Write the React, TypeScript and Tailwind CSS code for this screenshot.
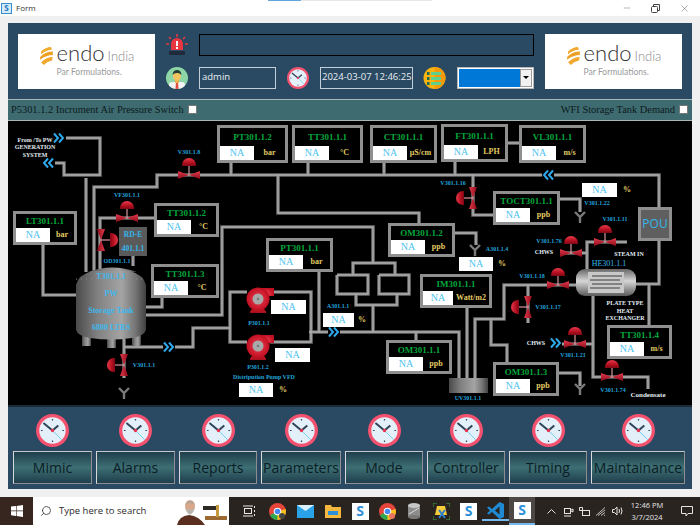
import { Minus, Search, X } from "lucide-react";

const serif = "font-['Liberation_Serif',serif]";

type Box = { t: string; x: number; y: number; w: number; h: number; u: string; nw?: number };

const boxes: Box[] = [
  { t: "LT301.1.1", x: 13, y: 211, w: 64, h: 34, u: "bar" },
  { t: "TT301.1.2", x: 154, y: 203, w: 65, h: 34, u: "°C" },
  { t: "TT301.1.3", x: 151, y: 264, w: 68, h: 34, u: "°C" },
  { t: "PT301.1.2", x: 217, y: 125, w: 71, h: 38, u: "bar" },
  { t: "TT301.1.1", x: 292, y: 125, w: 71, h: 38, u: "°C" },
  { t: "CT301.1.1", x: 370, y: 125, w: 67, h: 38, u: "µS/cm" },
  { t: "FT301.1.1", x: 441, y: 124, w: 67, h: 38, u: "LPH" },
  { t: "VL301.1.1", x: 519, y: 125, w: 67, h: 38, u: "m/s" },
  { t: "OM301.1.2", x: 388, y: 223, w: 67, h: 34, u: "ppb" },
  { t: "PT301.1.1", x: 266, y: 238, w: 67, h: 34, u: "bar" },
  { t: "OM301.1.1", x: 386, y: 340, w: 66, h: 34, u: "ppb" },
  { t: "IM301.1.1", x: 420, y: 274, w: 72, h: 34, u: "Watt/m2", nw: 30 },
  { t: "TOCT301.1.1", x: 493, y: 191, w: 67, h: 34, u: "ppb" },
  { t: "TT301.1.4", x: 607, y: 325, w: 65, h: 34, u: "m/s" },
  { t: "OM301.1.3", x: 493, y: 362, w: 66, h: 34, u: "ppb" },
];

const values = [
  { x: 271, y: 300, w: 35 },
  { x: 275, y: 348, w: 35 },
  { x: 239, y: 383, w: 34, u: "%", ux: 283 },
  { x: 323, y: 313, w: 31, u: "%", ux: 362 },
  { x: 459, y: 257, w: 34, u: "%", ux: 502 },
  { x: 582, y: 183, w: 35, u: "%", ux: 627 },
];

const labels = [
  { t: "V301.1.8", x: 189, y: 152 },
  { t: "VF301.1.1", x: 127, y: 195 },
  { t: "OD301.1.1", x: 117, y: 261 },
  { t: "V301.1.1", x: 144, y: 365 },
  { t: "P301.1.1", x: 259, y: 323 },
  { t: "P301.1.2", x: 258, y: 367 },
  { t: "Distripution Pump VFD", x: 264, y: 377 },
  { t: "A301.1.1", x: 338, y: 306 },
  { t: "V301.1.16", x: 453, y: 183 },
  { t: "V301.1.22", x: 597, y: 203 },
  { t: "V301.1.11", x: 615, y: 219 },
  { t: "V301.1.76", x: 549, y: 241 },
  { t: "A301.1.4", x: 497, y: 249 },
  { t: "V301.1.18", x: 532, y: 276 },
  { t: "V301.1.17", x: 548, y: 307 },
  { t: "V301.1.21", x: 573, y: 355 },
  { t: "V301.1.74", x: 613, y: 390 },
  { t: "UV301.1.1", x: 468, y: 398 },
];

const whiteLabels = [
  { t: "From /To PW", x: 35, y: 140 },
  { t: "GENERATION", x: 35, y: 147 },
  { t: "SYSTEM", x: 35, y: 155 },
  { t: "CHWS", x: 544, y: 252 },
  { t: "STEAM IN", x: 629, y: 254 },
  { t: "PLATE TYPE", x: 625, y: 303 },
  { t: "HEAT", x: 625, y: 311 },
  { t: "EXCHANGER", x: 625, y: 318 },
  { t: "CHWS", x: 536, y: 343 },
];

const tankText = [
  { t: "T301.1.1", y: 277 },
  { t: "PW", y: 294 },
  { t: "Storage Tank", y: 311 },
  { t: "6800 LTRS", y: 328 },
];

const pipes = [
  "66,138 100,138 100,175 64,175 64,163 55,163",
  "86,178 86,272",
  "94,272 94,187 157,187 157,175 659,175 659,207",
  "231,163 231,175",
  "308,163 308,175",
  "384,163 384,175",
  "455,162 455,175",
  "508,143 519,143",
  "278,175 278,213 419,213 419,223",
  "146,315 222,315 222,227 373,227 373,263",
  "353,275 353,263 395,263 395,275",
  "356,294 356,305 397,305 397,294",
  "337,275 368,275 368,294 337,294 337,275",
  "379,275 409,275 409,294 379,294 379,275",
  "373,305 373,332",
  "124,339 124,378",
  "124,347 193,347 193,328 230,328",
  "247,292 230,292 230,342 247,342",
  "270,292 311,292 311,342 270,342",
  "309,332 459,332 459,378",
  "416,332 416,340",
  "319,272 319,332",
  "467,308 467,378",
  "475,378 475,319 504,319 504,285 576,285",
  "528,285 528,323",
  "491,319 491,345 507,345 507,362",
  "559,373 580,373 580,386",
  "636,284 659,284 659,241",
  "649,284 649,325",
  "593,296 593,377 648,377 648,389",
  "556,344 593,344",
  "587,269 587,242 627,242",
  "560,253 587,253",
  "473,175 473,215 493,215",
  "560,199 580,199 580,212",
  "455,233 476,233 476,245",
  "154,218 100,218 100,272",
  "133,256 133,266",
  "43,245 43,295 76,295",
  "146,307 162,307 162,297",
];

const valves = [
  { x: 189, y: 175, r: 0 },
  { x: 127, y: 218, r: 0 },
  { x: 101, y: 240, r: 90 },
  { x: 124, y: 365, r: -90 },
  { x: 473, y: 198, r: -90 },
  { x: 605, y: 242, r: 0 },
  { x: 571, y: 253, r: 0 },
  { x: 558, y: 285, r: 0 },
  { x: 528, y: 307, r: -90 },
  { x: 575, y: 344, r: 0 },
  { x: 612, y: 377, r: 0 },
];

const chevrons = [
  { x: 59, y: 138, d: 1 },
  { x: 48, y: 163, d: -1 },
  { x: 169, y: 347, d: 1 },
  { x: 334, y: 332, d: 1 },
  { x: 548, y: 175, d: -1 },
  { x: 556, y: 343, d: 1 },
];

const drains = [
  { x: 124, y: 392 },
  { x: 475, y: 249 },
  { x: 580, y: 216 },
  { x: 580, y: 388 },
];

const menu = [
  { t: "Mimic", w: "w-[79px]" },
  { t: "Alarms", w: "w-[79px]" },
  { t: "Reports", w: "w-[78px]" },
  { t: "Parameters", w: "w-[80px]" },
  { t: "Mode", w: "w-[78px]" },
  { t: "Controller", w: "w-[78px]" },
  { t: "Timing", w: "w-[78px]" },
  { t: "Maintainance", w: "w-[94px]" },
];

const Clock = ({ size }: { size: number }) => (
  <svg width={size} height={size} viewBox="0 0 40 40" className="shrink-0">
    <circle cx="20" cy="20" r="20" fill="#f4516f" />
    <circle cx="20" cy="20" r="16" fill="#e3eff9" />
    <path d="M20 6v2M20 32v2M6 20h2M32 20h2" stroke="#33475b" strokeWidth="1.5" />
    <path d="M20 20 L9 11" stroke="#2f4358" strokeWidth="2.4" />
    <path d="M20 20 L27 14" stroke="#2f4358" strokeWidth="2.4" />
    <path d="M20 20 L31 31" stroke="#6fd0f2" strokeWidth="1.2" />
    <circle cx="20" cy="20" r="2" fill="#e8334f" />
  </svg>
);

const Logo = () => (
  <div className="flex h-[55px] w-[137px] shrink-0 items-center justify-center gap-[3px] bg-white pb-[2px]">
    <svg width="15" height="20" viewBox="0 0 16 22" className="mb-[8px]">
      <path d="M2 6 Q7 1 13 1 L14 4 Q8 4 2 9Z" fill="#f0a92e" />
      <path d="M1 12 Q7 6 15 6 L15 10 Q8 10 1 15Z" fill="#eda024" />
      <path d="M2 18 Q8 12 15 12 L14 16 Q9 17 5 21Z" fill="#f0a92e" />
    </svg>
    <div className="flex flex-col">
      <div className="flex items-baseline gap-[3px] font-['Lato',sans-serif] font-light leading-[19px]">
        <span className="text-[22px] text-[#333]">endo</span>
        <span className="text-[13px] text-[#8b8b8b]">India</span>
      </div>
      <span className="font-['Lato',sans-serif] text-[8.5px] leading-[12px] text-[#9a9a9a]">Par Formulations.</span>
    </div>
  </div>
);

const Alarm = () => (
  <svg width="22" height="23" viewBox="0 0 22 23" className="shrink-0">
    <path d="M5 17 V11 a6 6 0 0 1 12 0 V17Z" fill="#e8363f" />
    <rect x="10" y="8" width="2" height="5" fill="#fff" />
    <rect x="10" y="14" width="2" height="2" fill="#fff" />
    <rect x="3" y="18" width="16" height="4" rx="1" fill="#1f2a3a" />
    <path d="M11 1v3M3 4l2 2M19 4l-2 2M0 11h3M19 11h3" stroke="#e8363f" strokeWidth="1.6" />
  </svg>
);

const Avatar = () => (
  <svg width="22" height="22" viewBox="0 0 22 22" className="shrink-0">
    <circle cx="11" cy="11" r="11" fill="#8ed6a6" />
    <clipPath id="av">
      <circle cx="11" cy="11" r="11" />
    </clipPath>
    <g clipPath="url(#av)">
      <rect x="3" y="15" width="16" height="8" rx="3" fill="#f4f4f4" />
      <path d="M10 16h2l.6 6h-3.2Z" fill="#e0513f" />
      <rect x="9" y="12" width="4" height="4" fill="#eeb04c" />
      <ellipse cx="11" cy="9" rx="4" ry="4.5" fill="#f7c35f" />
      <path d="M6.5 8 Q7 3 11 3 Q15 3 15.5 8 Q13 5.5 11 6 Q8 6 6.5 8Z" fill="#25403a" />
    </g>
  </svg>
);

const MenuBadge = () => (
  <svg width="23" height="22" viewBox="0 0 23 22" className="shrink-0">
    <circle cx="11.5" cy="11" r="11" fill="#f9b30f" />
    <path d="M11.5 0a11 11 0 0 1 0 22Z" fill="#f39a0b" />
    <g fill="#5fd08c">
      <rect x="8" y="5" width="10" height="3" />
      <rect x="8" y="10" width="10" height="3" />
      <rect x="8" y="15" width="10" height="3" />
    </g>
    <g fill="#1d6b55">
      <rect x="4" y="5" width="2.5" height="3" />
      <rect x="4" y="10" width="2.5" height="3" />
      <rect x="4" y="15" width="2.5" height="3" />
    </g>
  </svg>
);

const Valve = ({ x, y, r }: { x: number; y: number; r: number }) => (
  <g transform={`translate(${x} ${y}) rotate(${r})`}>
    <path d="M-7 -10 a7 7 0 0 1 14 0 v1 h-14Z" fill="url(#dome)" />
    <rect x="-0.6" y="-9" width="1.2" height="9" fill="#d8959b" />
    <path d="M-11 -4 L0 0 L-11 4Z" fill="url(#bow)" />
    <path d="M11 -4 L0 0 L11 4Z" fill="url(#bow)" />
  </g>
);

const Chevron = ({ x, y, d }: { x: number; y: number; d: number }) => (
  <g transform={`translate(${x} ${y}) scale(${d} 1)`} fill="none" stroke="#2fa9ec" strokeWidth="2">
    <rect x="-6" y="-5" width="12" height="10" fill="#000" stroke="none" />
    <path d="M-5 -4.5 L-1 0 L-5 4.5" />
    <path d="M0 -4.5 L4 0 L0 4.5" />
  </g>
);

const Pump = ({ y }: { y: number }) => (
  <g transform={`translate(258 ${y})`}>
    <path d="M-8 14h16v-2h-16Z" fill="#a8101f" />
    <path d="M-5 8 L-8 13h16 L5 8Z" fill="#b5121f" />
    <path d="M0 -11 H16 V-3 H10 V0 H0Z" fill="url(#pump)" />
    <circle r="11.5" fill="url(#pump)" />
    <circle r="5.5" fill="#a9a9a9" />
    <circle r="1.2" fill="#777" />
  </g>
);

const Diagram = () => (
  <svg viewBox="8 121 684 284" className="absolute inset-0 h-full w-full">
    <defs>
      <linearGradient id="dome" x1="0" y1="0" x2="0" y2="1">
        <stop offset="0" stopColor="#e73a4a" />
        <stop offset="0.6" stopColor="#b30f20" />
        <stop offset="1" stopColor="#7e0714" />
      </linearGradient>
      <linearGradient id="bow" x1="0" y1="0" x2="0" y2="1">
        <stop offset="0" stopColor="#e43a4c" />
        <stop offset="1" stopColor="#8d0b1a" />
      </linearGradient>
      <radialGradient id="pump">
        <stop offset="0" stopColor="#f04052" />
        <stop offset="1" stopColor="#c10f22" />
      </radialGradient>
      <linearGradient id="steel" x1="0" y1="0" x2="1" y2="0">
        <stop offset="0" stopColor="#4a4a4a" />
        <stop offset="0.3" stopColor="#808080" />
        <stop offset="0.65" stopColor="#a4a4a4" />
        <stop offset="0.85" stopColor="#747474" />
        <stop offset="1" stopColor="#404040" />
      </linearGradient>
      <linearGradient id="shell" x1="0" y1="0" x2="0" y2="1">
        <stop offset="0" stopColor="#666" />
        <stop offset="0.45" stopColor="#d6d6d6" />
        <stop offset="1" stopColor="#5a5a5a" />
      </linearGradient>
    </defs>
    <g fill="none" strokeLinejoin="miter">
      {pipes.map((p) => (
        <polyline key={p} points={p} stroke="#6e6e6e" strokeWidth="3.6" />
      ))}
      {pipes.map((p) => (
        <polyline key={p} points={p} stroke="#b0b0b0" strokeWidth="1.4" />
      ))}
    </g>

    <g fill="url(#steel)">
      <rect x="82" y="333" width="9" height="13" />
      <rect x="107" y="335" width="9" height="13" />
      <rect x="132" y="333" width="9" height="13" />
      <path d="M88 272 Q112 263 137 272Z" />
      <path d="M76 285 Q78 275 92 271 H130 Q144 275 146 285 V330 Q144 336 132 338 Q111 341 90 338 Q78 336 76 330Z" />
    </g>
    <path d="M76 279 H146" stroke="#8b8b8b" strokeDasharray="1 4" />

    <rect x="449" y="378" width="39" height="15" fill="url(#steel)" />

    <rect x="576" y="269" width="60" height="27" rx="9" fill="url(#shell)" />
    <rect x="588" y="272" width="36" height="21" fill="#c8c8c8" />
    <path d="M592 276 H622 M590 280 H620 M592 284 H622 M590 288 H620" stroke="#3d3d3d" strokeWidth="1.2" />

    {valves.map((v) => (
      <Valve key={`${v.x}-${v.y}`} {...v} />
    ))}
    <Pump y={299} />
    <Pump y={346} />
    {chevrons.map((c) => (
      <Chevron key={`${c.x}-${c.y}`} {...c} />
    ))}
    {drains.map((d) => (
      <path
        key={`${d.x}-${d.y}`}
        d={`M${d.x - 5} ${d.y - 4} L${d.x} ${d.y + 1} L${d.x + 5} ${d.y - 4} M${d.x} ${d.y + 1} V${d.y + 7}`}
        stroke="#7a7a7a"
        strokeWidth="2.4"
        fill="none"
      />
    ))}
  </svg>
);

const NaBox = ({ w }: { w: number }) => (
  <div
    className={`flex h-[14px] shrink-0 items-center justify-center bg-white ${serif} text-[10px] leading-none text-[#4dc3f0]`}
    style={{ width: w }}
  >
    NA
  </div>
);

const Instrument = ({ t, x, y, w, h, u, nw = 34 }: Box) => (
  <div
    className="absolute flex flex-col border-[3px] border-[#8f8f8f] bg-black"
    style={{ left: x - 8, top: y - 121, width: w, height: h }}
  >
    <div className={`flex flex-1 items-center justify-center ${serif} text-[9px] font-bold leading-none text-[#00a83c]`}>{t}</div>
    <div className="flex items-center">
      <NaBox w={nw} />
      <span className={`flex-1 whitespace-nowrap text-center ${serif} text-[8px] font-bold leading-none text-[#e2cb63]`}>{u}</span>
    </div>
  </div>
);

const Mimic = () => (
  <div className="relative h-[284px] overflow-hidden bg-black">
    <Diagram />
    {tankText.map((l) => (
      <span
        key={l.t}
        className={`absolute left-[103px] -translate-x-1/2 -translate-y-1/2 whitespace-nowrap ${serif} text-[8px] font-bold text-[#3db8ee]`}
        style={{ top: l.y - 121 }}
      >
        {l.t}
      </span>
    ))}
    {boxes.map((b) => (
      <Instrument key={b.t} {...b} />
    ))}
    {values.map((v) => (
      <div key={v.x}>
        <div className="absolute" style={{ left: v.x - 8, top: v.y - 121 }}>
          <NaBox w={v.w} />
        </div>
        {v.u && (
          <span
            className={`absolute -translate-x-1/2 ${serif} text-[8px] font-bold leading-[14px] text-[#e2cb63]`}
            style={{ left: v.ux! - 8, top: v.y - 121 }}
          >
            {v.u}
          </span>
        )}
      </div>
    ))}
    {labels.map((l) => (
      <span
        key={l.t}
        className={`absolute -translate-x-1/2 -translate-y-1/2 whitespace-nowrap ${serif} text-[6px] font-bold text-[#21a4dc]`}
        style={{ left: l.x - 8, top: l.y - 121 }}
      >
        {l.t}
      </span>
    ))}
    {whiteLabels.map((l) => (
      <span
        key={`${l.t}-${l.y}`}
        className={`absolute -translate-x-1/2 -translate-y-1/2 whitespace-nowrap ${serif} text-[6px] font-bold text-[#e3eef5]`}
        style={{ left: l.x - 8, top: l.y - 121 }}
      >
        {l.t}
      </span>
    ))}
    <span className={`absolute left-[640px] top-[274px] -translate-x-1/2 -translate-y-1/2 whitespace-nowrap ${serif} text-[7px] font-bold text-[#e3eef5]`}>
      Condensate
    </span>
    <span className={`absolute left-[601px] top-[143px] -translate-x-1/2 -translate-y-1/2 whitespace-nowrap ${serif} text-[8px] text-[#35b6ec]`}>
      HE301.1.1
    </span>
    <div className={`absolute left-[111px] top-[106px] flex h-[29px] w-[28px] flex-col items-center justify-between bg-[#5a5a5a] py-[2px] ${serif} text-[7.5px] font-bold text-[#35b6ec]`}>
      <span>RD-E</span>
      <span>401.1.1</span>
    </div>
    <div className="absolute left-[630px] top-[86px] flex h-[34px] w-[34px] items-center justify-center border-[3px] border-[#8f8f8f] bg-[#5f5f5f] font-['Open_Sans',sans-serif] text-[12px] text-[#35b6ec]">
      POU
    </div>
  </div>
);

const Header = () => (
  <div className="flex h-[76px] items-center gap-[11px] bg-[#2a4a63] pl-[10px] pr-[10px]">
    <Logo />
    <div className="flex w-[368px] flex-col gap-[11px]">
      <div className="flex h-[22px] items-center gap-[11px]">
        <Alarm />
        <div className="h-[22px] flex-1 border border-black" />
      </div>
      <div className="flex h-[22px] items-center font-['Open_Sans',sans-serif] text-[9.5px] text-[#e8eef2]">
        <Avatar />
        <div className="ml-[11px] flex h-[22px] w-[77px] items-center border border-[#c4ced6] px-[2px]">admin</div>
        <div className="ml-[11px]">
          <Clock size={22} />
        </div>
        <div className="ml-[11px] flex h-[22px] w-[93px] items-center whitespace-nowrap border border-[#c4ced6] pl-[1px]">
          2024-03-07 12:46:25
        </div>
        <div className="ml-[10px]">
          <MenuBadge />
        </div>
        <div className="ml-[11px] flex h-[22px] w-[77px] items-center border border-[#b8b8b8] bg-white p-[1px]">
          <div className="h-full flex-1 bg-[#0078d7]" />
          <div className="flex h-full w-[12px] items-center justify-center border border-[#9a9a9a] bg-[#f2f2f2]">
            <div className="h-0 w-0 border-x-[3px] border-t-[3px] border-x-transparent border-t-black" />
          </div>
        </div>
      </div>
    </div>
    <Logo />
  </div>
);

const Strip = () => (
  <div className={`flex h-[22px] items-center justify-between border-y border-[#a9b5b7] bg-[#3e6b70] pl-[3px] pr-[4px] ${serif} text-[10.4px] text-[#0d1a1c]`}>
    <div className="flex items-center gap-[4px]">
      <span>P5301.1.2 Incrument Air Pressure Switch</span>
      <div className="h-[9px] w-[9px] rounded-[1px] border border-[#777] bg-white" />
    </div>
    <div className="flex items-center gap-[4px]">
      <span>WFI Storage Tank Demand</span>
      <div className="h-[9px] w-[9px] rounded-[1px] border border-[#777] bg-white" />
    </div>
  </div>
);

const Footer = () => (
  <div className="flex h-[84px] gap-[4px] border-t-2 border-[#1d2a33] bg-[#2a4a63] pl-[5px] pt-[7px]">
    {menu.map((m) => (
      <div key={m.t} className={`flex ${m.w} flex-col items-center gap-[4px]`}>
        <Clock size={33} />
        <div className="flex h-[33px] w-full items-center justify-center border border-[#8f8f8f] border-l-[#d8d8d8] border-t-[#c8c8c8] bg-gradient-to-b from-[#1f3f4d] via-[#3e6f74] to-[#1f3f4d] font-['Open_Sans',sans-serif] text-[14px] text-[#0b1d24]">
          {m.t}
        </div>
      </div>
    ))}
  </div>
);

const TbS = () => (
  <div className="flex h-[17px] w-[17px] items-center justify-center bg-white font-['Open_Sans',sans-serif] text-[14px] font-bold leading-none text-[#2d8fd8]">S</div>
);

const Chrome = ({ dot }: { dot: string }) => (
  <svg width="17" height="17" viewBox="0 0 17 17">
    <circle cx="8.5" cy="8.5" r="8.5" fill="#e6453a" />
    <path d="M8.5 8.5 L1 12 A8.5 8.5 0 0 0 8.5 17 L12 11Z" fill="#2fa84f" />
    <path d="M8.5 8.5 L16.5 6 A8.5 8.5 0 0 1 8.5 17Z" fill="#fbc11c" />
    <circle cx="8.5" cy="8.5" r="3.8" fill="#fff" />
    <circle cx="8.5" cy="8.5" r="2.8" fill="#4688f1" />
    <circle cx="13" cy="13" r="3" fill={dot} />
  </svg>
);

const Taskbar = () => (
  <div className="flex h-[28px] items-center bg-[#2a2421] font-['Open_Sans',sans-serif] text-white">
    <div className="flex h-full w-[33px] items-center justify-center bg-[#36261f]">
      <svg width="12" height="12" viewBox="0 0 12 12" fill="#fff">
        <path d="M0 1.6 5 1v4.6H0ZM5.6.9 12 0v5.6H5.6ZM0 6.2h5v4.7l-5-.6ZM5.6 6.2H12V12l-6.4-.9Z" />
      </svg>
    </div>
    <div className="flex h-full w-[196px] items-center bg-white pl-[7px] text-[#2b2b2b]">
      <Search size={12} strokeWidth={1.5} className="-scale-x-100" />
      <span className="ml-[7px] text-[9.5px]">Type here to search</span>
      <svg width="54" height="28" viewBox="0 0 54 28" className="ml-auto">
        <path d="M2 28 Q4 19 14 18 Q24 19 30 28Z" fill="#5a2f1f" />
        <ellipse cx="15" cy="9" rx="5" ry="6" fill="#d9a78a" />
        <path d="M10 11 Q15 24 20 11 Q15 14 10 11Z" fill="#b8b5ae" />
        <path d="M10 8 Q15 0 20 8 Q15 4 10 8Z" fill="#a9a39a" />
        <rect x="30" y="19" width="22" height="4" fill="#9a6a32" />
        <rect x="28" y="9" width="14" height="4" fill="#2e2a26" />
        <rect x="41" y="8" width="3" height="12" fill="#c69b3d" />
      </svg>
    </div>
    <div className="ml-[7px] flex items-center">
      <div className="flex w-[27px] justify-center">
        <svg width="13" height="12" viewBox="0 0 13 12" fill="none" stroke="#e8e8e8">
          <rect x="1.5" y="3.5" width="7" height="5" />
          <path d="M0 1h10M0 11h10M11.5 1v2M11.5 5v2M11.5 9v2" />
        </svg>
      </div>
      <div className="flex w-[28px] justify-center">
        <Chrome dot="#444" />
      </div>
      <div className="flex w-[28px] justify-center">
        <svg width="17" height="13" viewBox="0 0 17 13">
          <rect width="17" height="13" fill="#29a2e8" />
          <path d="M0 0 L8.5 6 L17 0Z" fill="#d8f0fb" />
        </svg>
      </div>
      <div className="flex w-[27px] justify-center">
        <svg width="16" height="14" viewBox="0 0 16 14">
          <path d="M0 1h6l1 2h9v11H0Z" fill="#f3b83d" />
          <rect x="3" y="7" width="10" height="4" fill="#2c8fd8" />
        </svg>
      </div>
      <div className="flex w-[28px] justify-center">
        <TbS />
      </div>
      <div className="flex w-[27px] justify-center">
        <Chrome dot="#e8745f" />
      </div>
      <div className="flex w-[26px] justify-center">
        <svg width="12" height="16" viewBox="0 0 12 16">
          <rect y="2" width="12" height="12" fill="#8d8d8d" />
          <ellipse cx="6" cy="2.5" rx="6" ry="2.5" fill="#c7c7c7" />
          <ellipse cx="6" cy="14" rx="6" ry="2" fill="#777" />
          <path d="M1 11 L11 5" stroke="#d8d8d8" />
        </svg>
      </div>
      <div className="flex w-[28px] justify-center">
        <svg width="17" height="17" viewBox="0 0 17 17">
          <path d="M4 3h8l2 9H2Z" fill="#f5cc3c" />
          <path d="M6 7 L12 15 M12 7 L6 15" stroke="#2b7fd0" strokeWidth="2" />
          <path d="M0 4V0h4M13 0h4v4M0 13v4h4M17 13v4h-4" stroke="#3fa04c" fill="none" />
        </svg>
      </div>
      <div className="flex w-[27px] justify-center">
        <TbS />
      </div>
      <div className="flex w-[27px] justify-center border-b-2 border-[#76b9ed]">
        <svg width="17" height="17" viewBox="0 0 17 17">
          <path d="M12.5 0 17 2v13l-4.5 2L5 10l-3 2.5L0 11.5l3-3-3-3L2 4.5 5 7Z" fill="#1f8ad2" />
          <path d="M12.5 4.5 8 8.5l4.5 4Z" fill="#2a2421" />
        </svg>
      </div>
      <div className="flex h-[28px] w-[26px] items-center justify-center border-b-2 border-[#76b9ed] bg-[#4d4846]">
        <TbS />
      </div>
    </div>
    <div className="ml-[7px] flex items-center text-[#e5e5e5]">
      <div className="flex w-[18px] justify-center">
        <svg width="9" height="5" viewBox="0 0 9 5" fill="none" stroke="#e5e5e5">
          <path d="M.5 4.5 4.5.5l4 4" />
        </svg>
      </div>
      <div className="flex w-[16px] justify-center">
        <svg width="11" height="11" viewBox="0 0 11 11" fill="none" stroke="#e5e5e5">
          <rect x="1.5" y="2.5" width="6" height="5" />
          <path d="M8 4l2-1v3l-2-1M1 10h7" />
        </svg>
      </div>
      <div className="flex w-[16px] justify-center">
        <svg width="11" height="9" viewBox="0 0 11 9" fill="none" stroke="#e5e5e5">
          <rect x="3.5" y="3.5" width="7" height="5" />
          <path d="M.5.5h3v3h-3Z" />
        </svg>
      </div>
      <div className="flex w-[18px] justify-center">
        <svg width="11" height="9" viewBox="0 0 11 9" fill="none" stroke="#bdbdbd">
          <path d="M0 8.5 9 .5M2 8.5 9 3M5 8.5 9 5.5M8 8.5 9 8" />
        </svg>
      </div>
      <div className="flex w-[14px] justify-center">
        <svg width="11" height="10" viewBox="0 0 11 10" fill="none" stroke="#e5e5e5">
          <path d="M.5 3.5h2L5 1v8L2.5 6.5h-2ZM7 3q1 2 0 4M9 1.5q2 3.5 0 7" />
        </svg>
      </div>
      <div className="ml-[2px] flex w-[42px] flex-col items-center text-[7.5px] leading-[12px]">
        <span>12:46 PM</span>
        <span>3/7/2024</span>
      </div>
      <div className="ml-[11px] flex w-[16px] justify-center">
        <svg width="12" height="11" viewBox="0 0 12 11" fill="none" stroke="#e5e5e5">
          <path d="M.5.5h11v7H7L5 10V7.5H.5Z" />
        </svg>
      </div>
    </div>
  </div>
);

export default function App() {
  return (
    <div className="flex h-[525px] w-[700px] flex-col overflow-hidden bg-[#f0f0f0]">
      <div className="relative flex h-[16px] items-center bg-white pl-[1px]">
        <div className="absolute left-[268px] top-0 h-[1px] w-[33px] bg-[#60a5e0]" />
        <div className="absolute left-[301px] top-0 h-[1px] w-[131px] bg-[#e8e8e8]" />
        <div className="flex h-[11px] w-[11px] items-center justify-center border border-[#3c8dcc] bg-[#d6ebf9] font-['Open_Sans',sans-serif] text-[8px] font-bold leading-none text-[#1f77c0]">
          S
        </div>
        <span className="ml-[4px] font-['Open_Sans',sans-serif] text-[8px] text-[#333]">Form</span>
        <div className="ml-auto mr-[10px] flex items-center gap-[19px] text-[#555]">
          <Minus size={10} strokeWidth={1} />
          <svg width="9" height="9" viewBox="0 0 9 9" fill="none" stroke="#444">
            <rect x="0.5" y="2.5" width="6" height="6" rx="1" />
            <path d="M2.5 2.5v-2h6v6h-2" />
          </svg>
          <X size={11} strokeWidth={1} />
        </div>
      </div>
      <div className="mt-[7px] px-[8px]">
        <Header />
        <Strip />
        <Mimic />
        <Footer />
      </div>
      <div className="mt-auto">
        <Taskbar />
      </div>
    </div>
  );
}
